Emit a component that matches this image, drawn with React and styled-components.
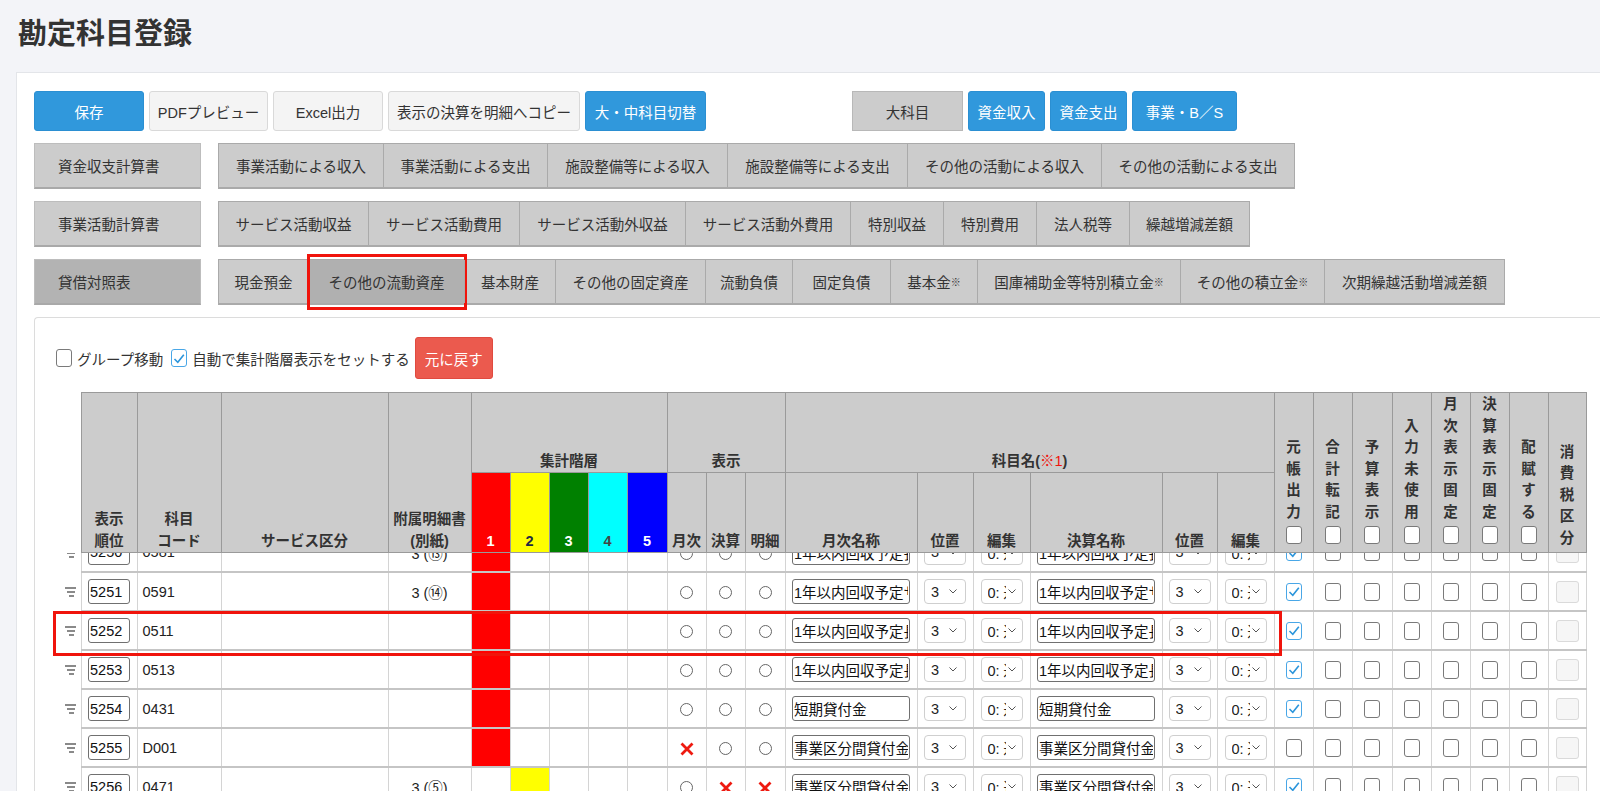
import React from 'react';
import styled, { createGlobalStyle, css } from 'styled-components';

const GlobalStyle = createGlobalStyle`
  html, body {
    margin: 0;
    overflow: hidden;
  }
  body {
    background: #f3f4f8;
    font-family: "Liberation Sans", "Noto Sans CJK JP", sans-serif;
    color: #333;
  }
  * {
    box-sizing: border-box;
  }
`;

const Title = styled.h1`
  margin: 0;
  height: 72px;
  padding: 14px 0 0 18px;
  font-size: 29px;
  line-height: 40px;
  font-weight: 700;
  color: #333;
`;

const Card = styled.section`
  margin-left: 16px;
  background: #fff;
  border: 1px solid #e3e5e9;
  border-right: none;
  padding: 18px 0 80px 17px;
`;

const Toolbar = styled.div`
  display: flex;
  gap: 5px;
  height: 40px;
`;

const ToolGroup = styled.div`
  display: flex;
  gap: 5px;
  margin-left: 141px;
`;

const variants = {
  primary: css`
    background: #3098dc;
    border-color: #2b8fd2;
    color: #fff;
  `,
  light: css`
    background: #f4f4f4;
    border-color: #d9d9d9;
    color: #333;
  `,
  gray: css`
    background: #cccccc;
    border-color: #b8b8b8;
    color: #333;
    border-radius: 0;
  `,
};

const ToolButton = styled.button`
  width: ${(p) => p.w}px;
  height: 40px;
  padding: 0;
  border: 1px solid;
  border-radius: 3px;
  font-family: inherit;
  font-size: 14.5px;
  white-space: nowrap;
  ${(p) => variants[p.variant || 'light']}
`;

const TabRow = styled.div`
  display: flex;
  height: 46px;
  margin-top: 12px;
`;

const SheetLabel = styled.div`
  width: 167px;
  display: flex;
  align-items: center;
  padding-left: 23px;
  background: ${(p) => (p.current ? '#b3b3b3' : '#cccccc')};
  border: 1px solid #bdbdbd;
  border-bottom: 2px solid #a9a9a9;
  font-size: 14.5px;
`;

const TabGroup = styled.div`
  display: flex;
  margin-left: 17px;
  border: 1px solid #aaa;
  border-bottom-width: 2px;
  background: #ccc;
`;

const Tab = styled.div`
  position: relative;
  width: ${(p) => p.w}px;
  display: flex;
  align-items: center;
  justify-content: center;
  font-size: 14.5px;
  white-space: nowrap;

  & + & {
    border-left: 1px solid #aaa;
  }

  ${(p) =>
    p.active &&
    css`
      background: #b0b0b0;
      &::after {
        content: '';
        position: absolute;
        left: -2px;
        right: -3px;
        top: -6px;
        bottom: -7px;
        border: 3px solid #f0140c;
      }
    `}
`;

const Note = styled.span`
  font-size: 10px;
`;

const Panel = styled.div`
  margin-top: 12px;
  background: #fff;
  border: 1px solid #dcdcdc;
  border-right: none;
  border-radius: 4px 0 0 0;
  padding: 19px 0 0 18px;
`;

const OptionBar = styled.div`
  display: flex;
  align-items: center;
  height: 42px;
  padding-left: 3px;
  font-size: 14.5px;
`;

const OptionLabel = styled.label`
  display: flex;
  align-items: center;
  gap: 5px;
  margin-right: ${(p) => p.mr}px;
  white-space: nowrap;
`;

const ResetButton = styled.button`
  width: 78px;
  height: 42px;
  padding: 0;
  background: #eb5a4e;
  border: 1px solid #e04a3f;
  border-radius: 3px;
  color: #fff;
  font-family: inherit;
  font-size: 14.5px;
`;

const Box = styled.span`
  flex: none;
  display: inline-flex;
  align-items: center;
  justify-content: center;
  width: 16px;
  height: 18px;
  border: 1px solid ${(p) => (p.checked ? '#49a7e7' : '#7a7a7a')};
  border-radius: 3px;
  background: #fff;
  vertical-align: middle;
`;

const TableArea = styled.div`
  margin-top: 13px;
`;

const Table = styled.table`
  width: 1532px;
  table-layout: fixed;
  border-collapse: collapse;
`;

const HeadRow = styled.tr`
  height: 80px;
`;

const Th = styled.th`
  padding: 0 0 ${(p) => p.pb || 0}px;
  border: 1px solid #9a9a9a;
  background: ${(p) => p.bg || '#cccccc'};
  color: ${(p) => p.fg || '#333'};
  font-size: 14.5px;
  font-weight: 700;
  line-height: 21.5px;
  vertical-align: bottom;
  text-align: center;
  white-space: nowrap;
`;

const BlankTh = styled.th`
  border: none;
  background: #fff;
  padding: 0;
`;

const VText = styled.div`
  display: flex;
  flex-direction: column;
  align-items: center;
`;

const HeadCheck = styled(Box)`
  display: flex;
  margin: 3px auto 8px;
`;

const Red = styled.span`
  color: #f0140c;
  font-weight: 400;
`;

const BodyClip = styled.div`
  height: 300px;
  overflow: hidden;
`;

const BodyTable = styled(Table)`
  margin-top: -20px;
`;

const BodyRow = styled.tr`
  height: 39px;
`;

const Td = styled.td`
  padding: 0 0 0 ${(p) => p.pl || 0}px;
  border-left: 1px solid #d4d4d4;
  border-right: 1px solid #d4d4d4;
  border-bottom: 2px solid #c5c5c5;
  background: ${(p) => p.bg || '#fff'};
  text-align: ${(p) => p.align || 'center'};
  font-size: 14.5px;
  color: #222;
  vertical-align: middle;
  white-space: nowrap;
  overflow: hidden;
`;

const HandleTd = styled.td`
  position: relative;
  padding: 0 0 0 12px;
  border: none;
  background: #fff;
  text-align: left;
  vertical-align: middle;

  ${(p) =>
    p.marked &&
    css`
      &::after {
        content: '';
        position: absolute;
        left: 0;
        top: 0;
        width: 1223px;
        height: 39px;
        border: 3px solid #f0140c;
        z-index: 2;
        pointer-events: none;
      }
    `}
`;

const TextBox = styled.input`
  width: ${(p) => p.w}px;
  height: 25px;
  padding: 0 1px;
  border: 1px solid #707070;
  border-radius: 3px;
  background: #fff;
  font-family: inherit;
  font-size: 14.5px;
  color: #111;
  vertical-align: middle;
`;

const SelectBox = styled.div`
  display: inline-flex;
  align-items: center;
  width: ${(p) => p.w}px;
  height: 25px;
  padding-left: 6px;
  border: 1px solid #cfcfcf;
  border-radius: 4px;
  background: #fff;
  font-size: 14.5px;
  color: #222;
  vertical-align: middle;
`;

const SelectText = styled.span`
  flex: 1;
  min-width: 0;
  overflow: hidden;
  text-align: left;
`;

const Chevron = styled.svg`
  flex: none;
  margin: 0 ${(p) => p.mr}px 0 2px;
`;

const Radio = styled.span`
  display: inline-block;
  width: 13px;
  height: 13px;
  border: 1px solid #666;
  border-radius: 50%;
  vertical-align: middle;
`;

const TaxBox = styled.span`
  display: inline-block;
  width: 23px;
  height: 22px;
  border: 1px solid #dadada;
  border-radius: 3px;
  background: #f6f6f6;
  vertical-align: middle;
`;

const COLS = [
  28, 56, 84, 167, 83,
  39, 39, 39, 39, 40,
  39, 39, 40,
  132, 56, 57, 132, 55, 57,
  39, 39, 40, 39, 39, 39, 39, 38,
];

const LEVELS = [
  { bg: '#ff0000', fg: '#fff' },
  { bg: '#ffff00', fg: '#1f2a44' },
  { bg: '#008000', fg: '#fff' },
  { bg: '#00ffff', fg: '#444' },
  { bg: '#0000ff', fg: '#fff' },
];

const FLAGS = ['元帳出力', '合計転記', '予算表示', '入力未使用', '月次表示固定', '決算表示固定', '配賦する'];

const sheets = [
  {
    label: '資金収支計算書',
    tabs: [
      ['事業活動による収入', 164],
      ['事業活動による支出', 164],
      ['施設整備等による収入', 180],
      ['施設整備等による支出', 180],
      ['その他の活動による収入', 194],
      ['その他の活動による支出', 193],
    ],
  },
  {
    label: '事業活動計算書',
    tabs: [
      ['サービス活動収益', 149],
      ['サービス活動費用', 151],
      ['サービス活動外収益', 166],
      ['サービス活動外費用', 165],
      ['特別収益', 93],
      ['特別費用', 93],
      ['法人税等', 93],
      ['繰越増減差額', 120],
    ],
  },
  {
    label: '貸借対照表',
    current: true,
    tabs: [
      ['現金預金', 89],
      ['その他の流動資産', 156, true],
      ['基本財産', 91],
      ['その他の固定資産', 150],
      ['流動負債', 87],
      ['固定負債', 98],
      ['基本金※', 87],
      ['国庫補助金等特別積立金※', 203],
      ['その他の積立金※', 144],
      ['次期繰越活動増減差額', 180],
    ],
  },
];

const rows = [
  { no: '5250', code: '0581', att: '3 (⑬)', level: 1, show: 'ooo', name: '1年以内回収予定長期貸付金', ledger: true },
  { no: '5251', code: '0591', att: '3 (⑭)', level: 1, show: 'ooo', name: '1年以内回収予定サービス区分間長期貸付金', ledger: true },
  { no: '5252', code: '0511', att: '', level: 1, show: 'ooo', name: '1年以内回収予定長期運営資金貸付金', ledger: true, marked: true },
  { no: '5253', code: '0513', att: '', level: 1, show: 'ooo', name: '1年以内回収予定長期貸付金', ledger: true },
  { no: '5254', code: '0431', att: '', level: 1, show: 'ooo', name: '短期貸付金', ledger: true },
  { no: '5255', code: 'D001', att: '', level: 1, show: 'xoo', name: '事業区分間貸付金', ledger: false },
  { no: '5256', code: '0471', att: '3 (⑤)', level: 2, show: 'oxx', name: '事業区分間貸付金', ledger: true },
  { no: '5257', code: '0472', att: '3 (⑤)', level: 2, show: 'oxx', name: '拠点区分間貸付金', ledger: true },
];

const Cols = () => (
  <colgroup>
    {COLS.map((w, i) => (
      <col key={i} style={{ width: w }} />
    ))}
  </colgroup>
);

const CheckMark = () => (
  <svg width="12" height="11" viewBox="0 0 12 11">
    <path d="M1.5 6 L4.8 9.2 L10.8 1.8" fill="none" stroke="#2b95db" strokeWidth="1.6" />
  </svg>
);

const Check = ({ checked }) => <Box checked={checked}>{checked && <CheckMark />}</Box>;

const Cross = () => (
  <svg width="14" height="14" viewBox="0 0 14 14" style={{ verticalAlign: 'middle' }}>
    <path d="M1.5 1.5 L12.5 12.5 M12.5 1.5 L1.5 12.5" stroke="#ee1a10" strokeWidth="2.8" />
  </svg>
);

const Handle = () => (
  <svg width="11" height="10" viewBox="0 0 11 10" style={{ display: 'block' }}>
    <rect x="0" y="0" width="11" height="2" fill="#8a8a8a" />
    <rect x="2" y="4" width="8" height="2" fill="#8a8a8a" />
    <rect x="4" y="8" width="5" height="2" fill="#8a8a8a" />
  </svg>
);

const Select = ({ w, value, mr }) => (
  <SelectBox w={w}>
    <SelectText>{value}</SelectText>
    <Chevron width="8" height="5" viewBox="0 0 8 5" mr={mr}>
      <path d="M0.5 0.5 L4 4 L7.5 0.5" fill="none" stroke="#555" strokeWidth="1" />
    </Chevron>
  </SelectBox>
);

const Vertical = ({ text }) => (
  <VText>
    {text.split('').map((c, i) => (
      <span key={i}>{c}</span>
    ))}
  </VText>
);

const TableHead = () => (
  <Table>
    <Cols />
    <thead>
      <HeadRow>
        <BlankTh rowSpan={2} />
        <Th rowSpan={2}>
          表示
          <br />
          順位
        </Th>
        <Th rowSpan={2}>
          科目
          <br />
          コード
        </Th>
        <Th rowSpan={2}>サービス区分</Th>
        <Th rowSpan={2}>
          附属明細書
          <br />
          (別紙)
        </Th>
        <Th colSpan={5}>集計階層</Th>
        <Th colSpan={3}>表示</Th>
        <Th colSpan={6}>
          科目名(<Red>※1</Red>)
        </Th>
        {FLAGS.map((f) => (
          <Th key={f} rowSpan={2}>
            <Vertical text={f} />
            <HeadCheck />
          </Th>
        ))}
        <Th rowSpan={2} pb={3}>
          <Vertical text="消費税区分" />
        </Th>
      </HeadRow>
      <HeadRow>
        {LEVELS.map((l, i) => (
          <Th key={i} bg={l.bg} fg={l.fg}>
            {i + 1}
          </Th>
        ))}
        <Th>月次</Th>
        <Th>決算</Th>
        <Th>明細</Th>
        <Th>月次名称</Th>
        <Th>位置</Th>
        <Th>編集</Th>
        <Th>決算名称</Th>
        <Th>位置</Th>
        <Th>編集</Th>
      </HeadRow>
    </thead>
  </Table>
);

const Row = ({ row }) => (
  <BodyRow>
    <HandleTd marked={row.marked}>
      <Handle />
    </HandleTd>
    <Td>
      <TextBox w={42} defaultValue={row.no} readOnly />
    </Td>
    <Td align="left" pl={5}>
      {row.code}
    </Td>
    <Td />
    <Td>{row.att}</Td>
    {LEVELS.map((l, i) => (
      <Td key={i} bg={row.level === i + 1 ? l.bg : undefined} />
    ))}
    {row.show.split('').map((s, i) => (
      <Td key={i}>{s === 'x' ? <Cross /> : <Radio />}</Td>
    ))}
    <Td>
      <TextBox w={118} defaultValue={row.name} readOnly />
    </Td>
    <Td>
      <Select w={42} value="3" mr={8} />
    </Td>
    <Td>
      <Select w={42} value="0: 通常" mr={6} />
    </Td>
    <Td>
      <TextBox w={118} defaultValue={row.name} readOnly />
    </Td>
    <Td>
      <Select w={42} value="3" mr={8} />
    </Td>
    <Td>
      <Select w={42} value="0: 通常" mr={6} />
    </Td>
    {FLAGS.map((f, i) => (
      <Td key={f}>
        <Check checked={i === 0 && row.ledger} />
      </Td>
    ))}
    <Td>
      <TaxBox />
    </Td>
  </BodyRow>
);

export default function App() {
  return (
    <>
      <GlobalStyle />
      <Title>勘定科目登録</Title>
      <Card>
        <Toolbar>
          <ToolButton w={110} variant="primary">保存</ToolButton>
          <ToolButton w={119}>PDFプレビュー</ToolButton>
          <ToolButton w={110}>Excel出力</ToolButton>
          <ToolButton w={192}>表示の決算を明細へコピー</ToolButton>
          <ToolButton w={121} variant="primary">大・中科目切替</ToolButton>
          <ToolGroup>
            <ToolButton w={111} variant="gray">大科目</ToolButton>
            <ToolButton w={77} variant="primary">資金収入</ToolButton>
            <ToolButton w={77} variant="primary">資金支出</ToolButton>
            <ToolButton w={105} variant="primary">事業・B／S</ToolButton>
          </ToolGroup>
        </Toolbar>

        {sheets.map((s) => (
          <TabRow key={s.label}>
            <SheetLabel current={s.current}>{s.label}</SheetLabel>
            <TabGroup>
              {s.tabs.map(([name, w, active]) => (
                <Tab key={name} w={w} active={active}>
                  {name.endsWith('※') ? (
                    <>
                      {name.slice(0, -1)}
                      <Note>※</Note>
                    </>
                  ) : (
                    name
                  )}
                </Tab>
              ))}
            </TabGroup>
          </TabRow>
        ))}

        <Panel>
          <OptionBar>
            <OptionLabel mr={8}>
              <Check />
              グループ移動
            </OptionLabel>
            <OptionLabel mr={5}>
              <Check checked />
              自動で集計階層表示をセットする
            </OptionLabel>
            <ResetButton>元に戻す</ResetButton>
          </OptionBar>

          <TableArea>
            <TableHead />
            <BodyClip>
              <BodyTable>
                <Cols />
                <tbody>
                  {rows.map((r) => (
                    <Row key={r.no} row={r} />
                  ))}
                </tbody>
              </BodyTable>
            </BodyClip>
          </TableArea>
        </Panel>
      </Card>
    </>
  );
}
